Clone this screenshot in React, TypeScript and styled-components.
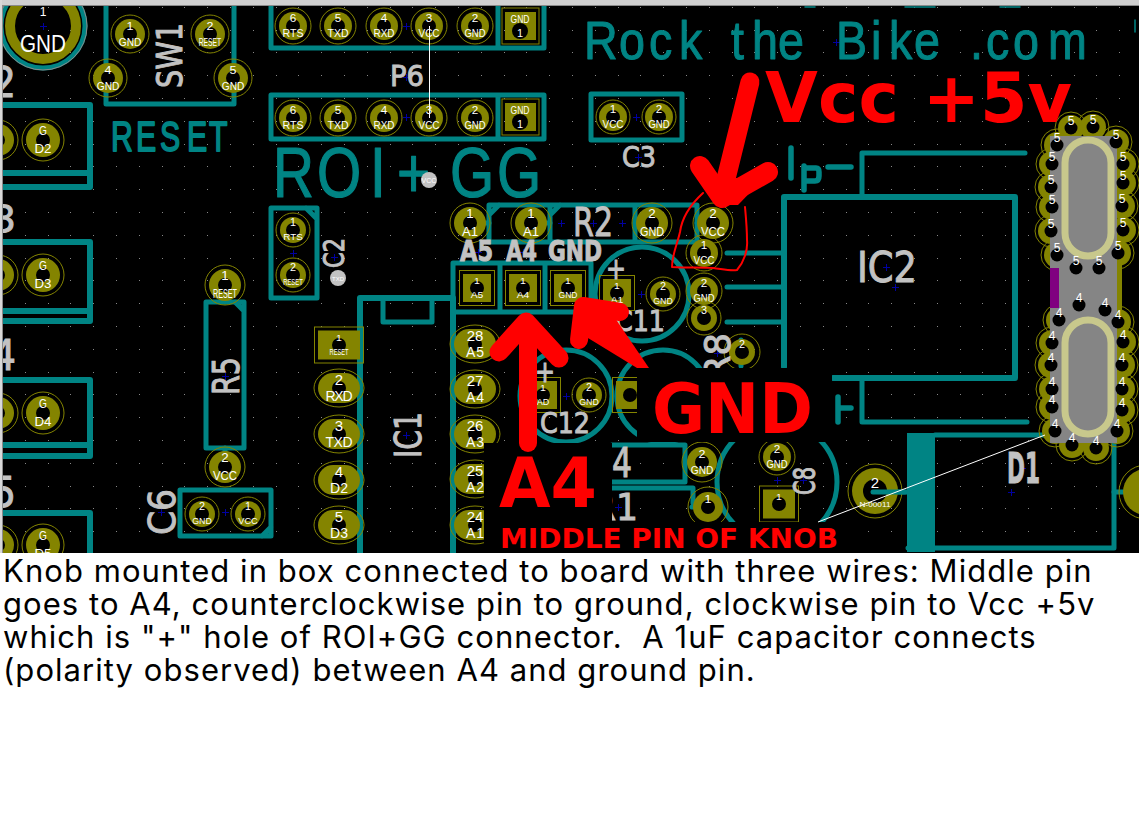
import React from "react";
import styled, { createGlobalStyle } from "styled-components";

const TEAL = "#008484";
const GOLD = "#848400";
const GRAY = "#c2c2c2";
const RED = "#ff0000";

const Global = createGlobalStyle`
  html, body { margin: 0; padding: 0; background: #fff; }
`;
const Page = styled.main`
  display: flex;
  flex-direction: column;
  width: 1139px;
  min-height: 816px;
  background: #fff;
`;
const Board = styled.svg`
  display: block;
  flex: none;
  width: 1139px;
  height: 553px;
`;
const Caption = styled.p`
  margin: 1px 0 0;
  padding: 0 0 0 3px;
  font-family: Inter, "Liberation Sans", Arial, sans-serif;
  font-size: 31px;
  line-height: 33px;
  color: #000;
`;
const CaptionLine = styled.span`
  display: block;
  white-space: pre;
  letter-spacing: 1.05px;
`;
const Track = styled.path`
  fill: none;
  stroke: ${TEAL};
  stroke-width: ${(p: { $w?: number }) => p.$w ?? 5};
  stroke-linecap: round;
  stroke-linejoin: round;
`;
const Ink = styled.path`
  fill: none;
  stroke: ${RED};
  stroke-width: ${(p: { $w: number }) => p.$w};
  stroke-linecap: round;
  stroke-linejoin: round;
`;
const PadLabel = styled.text`
  font-family: "Liberation Sans", Arial, sans-serif;
  fill: #fff;
  text-anchor: middle;
`;
const SilkText = styled.text`
  font-family: "DejaVu Sans", sans-serif;
  fill: ${GRAY};
  stroke: ${GRAY};
  stroke-width: 1px;
`;
const CopperText = styled.text`
  font-family: "Liberation Sans", Arial, sans-serif;
  fill: ${TEAL};
  stroke: ${TEAL};
  stroke-linejoin: round;
`;
const NoteText = styled.text`
  font-family: "DejaVu Sans", sans-serif;
  font-weight: 700;
  fill: ${RED};
`;
const HoleRing = styled.circle`
  fill: none;
  stroke: ${GOLD};
  stroke-width: 1px;
`;
const ThinLine = styled.path`
  fill: none;
  stroke: #fff;
  stroke-width: 1px;
`;
const Dots = styled.path`
  fill: #888;
  shape-rendering: crispEdges;
`;
const Crosses = styled.path`
  fill: none;
  stroke: #0000a0;
  stroke-width: 1px;
  shape-rendering: crispEdges;
`;

type PadProps = { x: number; y: number; r?: number; ring?: number; hole?: number; top?: string; bottom?: string; w?: number; h?: number };

const labelLen = (s: string, k: number) => Math.min(s.length * 7, 21) * k;

const Labels = ({ x, y, top, bottom, k }: { x: number; y: number; top?: string; bottom?: string; k: number }) => (
  <>
    {top && (
      <PadLabel x={x} y={y - 4 * k} fontSize={11 * k} textLength={top.length * 6.5 * k} lengthAdjust="spacingAndGlyphs">
        {top}
      </PadLabel>
    )}
    {bottom && (
      <PadLabel x={x} y={y + 11 * k} fontSize={10.5 * k} textLength={labelLen(bottom, k)} lengthAdjust="spacingAndGlyphs">
        {bottom}
      </PadLabel>
    )}
  </>
);

const Pad = ({ x, y, r = 14, ring = 18, hole = 7, top, bottom }: PadProps) => (
  <g>
    <circle cx={x} cy={y} r={ring} fill="none" stroke={GOLD} />
    <circle cx={x} cy={y} r={r} fill={GOLD} />
    <circle cx={x} cy={y} r={hole} fill="#000" />
    <Labels x={x} y={y} top={top} bottom={bottom} k={r / 14} />
  </g>
);

const Oval = ({ x, y, top, bottom }: PadProps) => (
  <g>
    <ellipse cx={x} cy={y} rx={25} ry={19} fill="none" stroke={GOLD} />
    <rect x={x - 21} y={y - 15} width={42} height={30} rx={15} fill={GOLD} />
    <circle cx={x} cy={y} r={7} fill="#000" />
    <PadLabel x={x} y={y - 3} fontSize={15}>{top}</PadLabel>
    <PadLabel x={x} y={y + 13} fontSize={14} textLength={bottom && bottom.length > 2 ? 27 : 18} lengthAdjust="spacing">{bottom}</PadLabel>
  </g>
);

const Square = ({ x, y, w = 28, h = 28, top, bottom }: PadProps) => (
  <g>
    <rect x={x - w / 2 - 3.5} y={y - h / 2 - 3.5} width={w + 7} height={h + 7} fill="none" stroke={GOLD} />
    <rect x={x - w / 2} y={y - h / 2} width={w} height={h} fill={GOLD} />
    <circle cx={x} cy={y} r={7} fill="#000" />
    <Labels x={x} y={y} top={top} bottom={bottom} k={0.9} />
  </g>
);

const grid = () => {
  let d = "";
  for (let i = 0; i < 50; i++)
    for (let j = 0; j < 25; j++) {
      const x = Math.round(1.9 + i * 22.8);
      const y = Math.round(6.8 + j * 22.8);
      d += `M${x} ${y}h1v1h-1z`;
    }
  return d;
};

const crossPts: [number, number][] = [
  [43, 26], [293, 253], [334, 257], [170, 137], [406, 26], [406, 117], [406, 77], [636, 117], [638, 157],
  [561, 223], [593, 223], [622, 223], [478, 252], [523, 252], [836, 42], [886, 267], [225, 376], [225, 512],
  [161, 512], [406, 435], [566, 396], [641, 294], [717, 353], [618, 507], [477, 287], [523, 287], [568, 287],
  [895, 287], [777, 480], [803, 480], [1011, 492], [1022, 468],
];
const crosses = crossPts.map(([x, y]) => `M${x - 3} ${y + 0.5}h7M${x + 0.5} ${y - 3}v7`).join("");

const row = (y: number) =>
  ([[293, "6", "RTS"], [338, "5", "TXD"], [384, "4", "RXD"], [429, "3", "VCC"], [475, "2", "GND"]] as [number, string, string][]).map(
    ([x, t, b]) => <Pad key={`${x}-${y}`} x={x} y={y} top={t} bottom={b} />
  );

const headerSquare = (y: number) => (
  <g>
    <rect x={502} y={y - 18} width={37} height={36} fill="none" stroke={GOLD} />
    <rect x={505} y={y - 14} width={31} height={28} fill={GOLD} />
    <circle cx={520} cy={y + 5} r={8} fill="#000" />
    <PadLabel x={520} y={y - 3} fontSize={10.5} textLength={19} lengthAdjust="spacingAndGlyphs">GND</PadLabel>
    <PadLabel x={520} y={y + 11} fontSize={11}>1</PadLabel>
  </g>
);

const topHoles: [number, number][] = [
  [1071, 128], [1093, 127], [1116, 142], [1057, 145], [1123, 164], [1052, 164], [1123, 183], [1051, 187],
  [1122, 206], [1052, 207], [1123, 230], [1051, 231], [1118, 253], [1057, 255], [1076, 268], [1099, 268],
];
const lowHoles: [number, number][] = [
  [1079, 305], [1105, 310], [1118, 322], [1059, 320], [1123, 342], [1052, 343], [1122, 365], [1051, 365],
  [1122, 389], [1052, 389], [1122, 410], [1052, 407], [1117, 431], [1055, 431], [1072, 445], [1096, 448],
];
const holeSets: [[number, number][], string][] = [[topHoles, "5"], [lowHoles, "4"]];

const Crystal = () => (
  <g>
    {holeSets.map(([set, n]) => set.map(([x, y]) => <HoleRing key={`r${n}${x}${y}`} cx={x} cy={y} r={16} />))}
    {holeSets.map(([set, n]) => set.map(([x, y]) => <circle key={`g${n}${x}${y}`} cx={x} cy={y} r={13} fill={GOLD} />))}
    <rect x={1117} y={262} width={5} height={50} fill={GOLD} />
    <rect x={1050} y={136} width={67} height={307} fill="#858585" />
    <rect x={1050} y={268} width={9} height={40} fill="#800080" />
    <rect x={1065} y={140} width={46} height={116} rx={23} fill="none" stroke="#c8c88c" strokeWidth={7} />
    <rect x={1065} y={320} width={46} height={114} rx={23} fill="none" stroke="#c8c88c" strokeWidth={7} />
    {holeSets.map(([set, n]) =>
      set.map(([x, y]) => (
        <g key={`h${n}${x}${y}`}>
          <circle cx={x} cy={y} r={6.5} fill="#000" />
          <PadLabel x={x} y={y - 3} fontSize={12}>{n}</PadLabel>
        </g>
      ))
    )}
  </g>
);

const Rotated = ({ x, y, size, len, children }: { x: number; y: number; size: number; len: number; children: string }) => (
  <SilkText transform={`translate(${x} ${y}) rotate(-90)`} fontSize={size} textLength={len} lengthAdjust="spacingAndGlyphs">
    {children}
  </SilkText>
);

const Silk = ({ x, y, size, len, weight, children }: { x: number; y: number; size: number; len: number; weight?: number; children: string }) => (
  <SilkText x={x} y={y} fontSize={size} fontWeight={weight} textLength={len} lengthAdjust="spacingAndGlyphs">
    {children}
  </SilkText>
);

/* Monoline copper lettering: narrowed glyphs placed letter by letter. */
const Copper = ({ xs, y, size, squeeze, weight, children }: { xs: number[]; y: number; size: number; squeeze: number; weight: number; children: string }) => (
  <CopperText
    transform={`translate(0 ${y}) scale(${squeeze} 1)`}
    x={xs.map((v) => (v / squeeze).toFixed(1)).join(" ")}
    y={0}
    fontSize={size}
    strokeWidth={weight}
  >
    {children}
  </CopperText>
);

export default function App() {
  return (
    <Page>
      <Global />
      <Board viewBox="0 0 1139 553" role="img" aria-label="KiCad circuit board layout with annotated knob connections">
        <rect width={1139} height={553} fill="#000" />
        <Dots d={grid()} />
        <Crosses d={crosses} />

        {/* left-hand D boxes */}
        <Track $w={6} d="M3 105H90V187H3M3 173H90" />
        <Track $w={6} d="M3 242H90V321H3M3 311H90" />
        <Track $w={6} d="M3 380H90V456H3M3 445H90" />
        <Track $w={6} d="M3 513H90V553" />

        {/* connectors and outlines */}
        <Track $w={5} d="M106 6V104H234V6" />
        <Track d="M271 6V48H544V6M498 6V48" />
        <Track d="M271 139V95H544V139ZM498 95V139" />
        <Track d="M591 94H682V140H591Z" />
        <Track d="M271 208H317V298H271ZM306 208L317 219" />
        <Track d="M206 302H244V448H206ZM235 302L244 311" />
        <Track d="M180 490H271V536H180ZM262 536L271 527" />
        <Track $w={6} d="M360 553V298H453M453 298V553" />
        <Track $w={5} d="M383 298V322H432V298" />
        <Track d="M489 205H697M489 242H697M489 205V242M550 205V242M635 205V242M697 205V242M489 215L499 205M550 215L560 205" />
        <Track d="M453 312V263H591V312H453M500 263V312M545 263V312" />
        <circle cx={642} cy={294} r={47} fill="none" stroke={TEAL} strokeWidth={5} />
        <circle cx={566} cy={396} r={46} fill="none" stroke={TEAL} strokeWidth={5} />
        <circle cx={663} cy={396} r={46} fill="none" stroke={TEAL} strokeWidth={5} />
        <circle cx={777} cy={482} r={60} fill="none" stroke={TEAL} strokeWidth={5} />

        {/* IC2 */}
        <Track $w={6} d="M784 367V197H1015V378H833" />
        <Track d="M862 197V153H1025M862 378V422H1027" />
        <Track d="M727 253H784M727 287H784M727 322H784" />
        <Track $w={5.5} d="M791 148V178M804 166V190M804 168H816Q819 168 819 172V176Q819 181 815 181H804M828 167H851" />
        <Track $w={5.5} d="M838 397V422M838 408H851" />

        {/* D1 */}
        <rect x={907} y={433} width={28} height={119} fill={TEAL} />
        <Track $w={5} d="M935 435H1114V548H908" />
        <Track d="M873 492H907M1114 492H1130" />
        <Track d="M470 223H489M531 223H550M635 223H652M697 223H713M225 272V302M225 448V467M741 340V366M686 462H702M692 507H708" />

        {/* R1 */}
        <Track d="M612 445H685V482H612M612 488H693V503" />

        {/* stray copper at the top edge */}
        <Track $w={1.5} d="M805 7H815M905 7H935M1000 7H1020M1135 20V32" />

        {/* copper text */}
        <Copper xs={[111, 136, 160, 187, 209]} y={151} size={42} squeeze={0.72} weight={1.8}>RESET</Copper>
        <Copper xs={[273, 317, 370, 397, 450, 497]} y={197} size={71} squeeze={0.8} weight={1.2}>ROI+GG</Copper>
        <Copper
          xs={[584, 619, 649, 679, 712, 731, 752, 778, 815, 836, 871, 889, 914, 950, 970, 986, 1013, 1048]}
          y={59}
          size={53}
          squeeze={0.88}
          weight={1}
        >
          Rock the Bike .com
        </Copper>

        {/* pads */}
        <circle cx={43} cy={26} r={42} fill="none" stroke={TEAL} strokeWidth={5} />
        <circle cx={43} cy={26} r={44} fill="none" stroke="#8a8a8a" strokeWidth={1} />
        <circle cx={43} cy={26} r={33} fill="none" stroke={GOLD} strokeWidth={10} />
        <PadLabel x={43} y={52} fontSize={23} textLength={46} lengthAdjust="spacingAndGlyphs">GND</PadLabel>
        <PadLabel x={43} y={16} fontSize={12}>1</PadLabel>

        <Pad x={130} y={34} r={15} ring={19} top="1" bottom="GND" />
        <Pad x={210} y={34} r={15} ring={19} top="2" bottom="RESET" />
        <Pad x={108} y={78} r={15} ring={19} top="4" bottom="GND" />
        <Pad x={233} y={78} r={15} ring={19} top="5" bottom="GND" />

        {[140, 275, 413, 545].map((y, i) => (
          <g key={y}>
            <Pad x={-2} y={y} r={16} ring={20} />
            <Pad x={43} y={y} r={17} ring={21} top="G" bottom={`D${i + 2}`} />
          </g>
        ))}

        {row(26)}
        {row(118)}
        {headerSquare(26)}
        {headerSquare(117)}
        <ThinLine d="M429.5 26V118" />

        <Pad x={613} y={117} r={14} ring={17} top="1" bottom="VCC" />
        <Pad x={659} y={117} r={14} ring={17} top="2" bottom="GND" />
        <Pad x={293} y={230} r={13} ring={17} top="1" bottom="RTS" />
        <Pad x={293} y={275} r={13} ring={17} top="2" bottom="RESET" />
        <Pad x={225} y={285} r={16} ring={20} top="1" bottom="RESET" />
        <Pad x={225} y={467} r={16} ring={20} top="2" bottom="VCC" />
        <Pad x={202} y={514} r={13} ring={17} top="2" bottom="GND" />
        <Pad x={248} y={514} r={13} ring={17} top="1" bottom="VCC" />

        <Pad x={470} y={223} r={16} ring={20} top="1" bottom="A1" />
        <Pad x={531} y={223} r={16} ring={20} top="1" bottom="A1" />
        <Pad x={652} y={223} r={16} ring={20} top="2" bottom="GND" />
        <Pad x={713} y={223} r={16} ring={20} top="2" bottom="VCC" />
        <Pad x={704} y={253} r={14} ring={18} top="1" bottom="VCC" />
        <Pad x={704} y={291} r={14} ring={18} top="2" bottom="GND" />
        <Pad x={704} y={318} r={13} ring={17} top="3" />
        <Pad x={742} y={352} r={13} ring={18} top="2" />
        <Pad x={663} y={294} r={13} ring={17} top="2" bottom="GND" />
        <Pad x={589} y={395} r={13} ring={17} top="2" bottom="GND" />
        <Pad x={702} y={462} r={15} ring={20} top="2" bottom="GND" />
        <Pad x={708} y={507} r={15} ring={20} top="1" />
        <Pad x={777} y={457} r={14} ring={18} top="2" bottom="GND" />

        <Square x={477} y={288} top="1" bottom="A5" />
        <Square x={523} y={288} top="1" bottom="A4" />
        <Square x={568} y={288} top="1" bottom="GND" />
        <Square x={617} y={293} top="1" bottom="A1" />
        <Square x={543} y={395} top="1" bottom="AD" />
        <Square x={630} y={395} />
        <Square x={339} y={345} w={42} h={29} top="1" bottom="RESET" />
        <Square x={779} y={504} w={32} h={29} top="1" />

        <Oval x={339} y={388} top="2" bottom="RXD" />
        <Oval x={339} y={434} top="3" bottom="TXD" />
        <Oval x={339} y={480} top="4" bottom="D2" />
        <Oval x={339} y={525} top="5" bottom="D3" />
        <Oval x={475} y={344} top="28" bottom="A5" />
        <Oval x={475} y={389} top="27" bottom="A4" />
        <Oval x={475} y={434} top="26" bottom="A3" />
        <Oval x={475} y={479} top="25" bottom="A2" />
        <Oval x={475} y={525} top="24" bottom="A1" />

        <circle cx={875} cy={491} r={27} fill="none" stroke={GOLD} />
        <circle cx={875} cy={491} r={23} fill={GOLD} />
        <circle cx={875} cy={491} r={12} fill="#000" />
        <Track d="M873 492H905" />
        <PadLabel x={875} y={488} fontSize={15}>2</PadLabel>
        <PadLabel x={875} y={507} fontSize={7} textLength={31} lengthAdjust="spacingAndGlyphs">N-00011</PadLabel>
        <circle cx={1146} cy={492} r={23} fill={GOLD} />
        <circle cx={1146} cy={492} r={27} fill="none" stroke={GOLD} />

        <circle cx={429} cy={180} r={8} fill={GRAY} />
        <PadLabel x={429} y={183} fontSize={7}>VCC</PadLabel>
        <circle cx={338} cy={278} r={8} fill={GRAY} />
        <PadLabel x={338} y={281} fontSize={6}>TXD</PadLabel>

        <Crystal />

        {/* silkscreen */}
        <Rotated x={182} y={88} size={35} len={65}>SW1</Rotated>
        <Silk x={390} y={86} size={29} len={34}>P6</Silk>
        <Silk x={622} y={167} size={29} len={34}>C3</Silk>
        <Silk x={573} y={236} size={39} len={40}>R2</Silk>
        <Silk x={460} y={261} size={28} len={33} weight={700}>A5</Silk>
        <Silk x={506} y={261} size={28} len={31} weight={700}>A4</Silk>
        <Silk x={548} y={261} size={28} len={54} weight={700}>GND</Silk>
        <Silk x={857} y={282} size={43} len={60}>IC2</Silk>
        <Silk x={1007} y={483} size={42} len={33} weight={700}>D1</Silk>
        <Rotated x={239} y={395} size={38} len={38}>R5</Rotated>
        <Rotated x={175} y={535} size={38} len={46}>C6</Rotated>
        <Rotated x={344} y={268} size={29} len={30}>C2</Rotated>
        <Rotated x={421} y={458} size={38} len={46}>IC1</Rotated>
        <Rotated x={730} y={380} size={36} len={47}>R8</Rotated>
        <Rotated x={815} y={495} size={30} len={28}>C8</Rotated>
        <Silk x={615} y={331} size={28} len={50}>C11</Silk>
        <Silk x={540} y={433} size={28} len={50}>C12</Silk>
        <Silk x={606} y={279} size={30} len={20}>+</Silk>
        <Silk x={535} y={382} size={30} len={20}>+</Silk>
        <Silk x={-8} y={97} size={42} len={24}>2</Silk>
        <Silk x={-8} y={232} size={38} len={24}>3</Silk>
        <Silk x={-8} y={370} size={42} len={24}>4</Silk>
        <Silk x={-8} y={507} size={42} len={24}>5</Silk>
        <Silk x={590} y={477} size={40} len={42}>R4</Silk>
        <Silk x={592} y={520} size={38} len={46}>R1</Silk>

        {/* annotation patches */}
        <rect x={637} y={368} width={195} height={74} fill="#000" />
        <rect x={484} y={443} width={128} height={110} fill="#000" />
        <rect x={484} y={522} width={366} height={31} fill="#000" />

        {/* net lines over the patches */}
        <ThinLine d="M818 522L1045 435" />

        {/* annotations */}
        <Ink $w={2} d="M703 193C690 205 682 217 680 232C677 245 672 255 672 267C690 268 700 267 713 268C722 269 730 271 737 270C744 262 748 250 747 240C747 228 746 218 745 207" />
        <Ink $w={19} d="M750 82L722 195" />
        <Ink $w={20} d="M700 166L722 198L768 172" />
        <path d="M706 180L766 176L738 205L716 205Z" fill={RED} />

        <Ink $w={18} d="M528 330V443" />
        <path d="M519 436H537V443H519Z" fill={RED} />
        <Ink $w={19} d="M499 352L526 322L559 358" />

        <path d="M585 308L615 318L649 368H637L588 338Z" fill={RED} />
        <Ink $w={18} d="M579 340L583 306L620 312" />

        <NoteText x={765} y={122} fontSize={70} textLength={307} lengthAdjust="spacingAndGlyphs">Vcc +5v</NoteText>
        <NoteText x={652} y={433} fontSize={70} textLength={161} lengthAdjust="spacingAndGlyphs">GND</NoteText>
        <NoteText x={499} y={507} fontSize={70} textLength={98} lengthAdjust="spacingAndGlyphs">A4</NoteText>
        <NoteText x={500} y={548} fontSize={27} textLength={338} lengthAdjust="spacingAndGlyphs">MIDDLE PIN OF KNOB</NoteText>

        {/* window chrome */}
        <rect width={1139} height={5} fill="#d0d0d0" />
        <rect y={5} width={1139} height={1} fill="#8a8a8a" />
        <rect width={2} height={553} fill="#d8d8d8" />
        <rect x={2} y={5} width={1} height={548} fill="#8a8a8a" />
      </Board>
      <Caption>
        <CaptionLine>Knob mounted in box connected to board with three wires: Middle pin</CaptionLine>
        <CaptionLine>goes to A4, counterclockwise pin to ground, clockwise pin to Vcc +5v</CaptionLine>
        <CaptionLine>which is "+" hole of ROI+GG connector.  A 1uF capacitor connects</CaptionLine>
        <CaptionLine>(polarity observed) between A4 and ground pin.</CaptionLine>
      </Caption>
    </Page>
  );
}
